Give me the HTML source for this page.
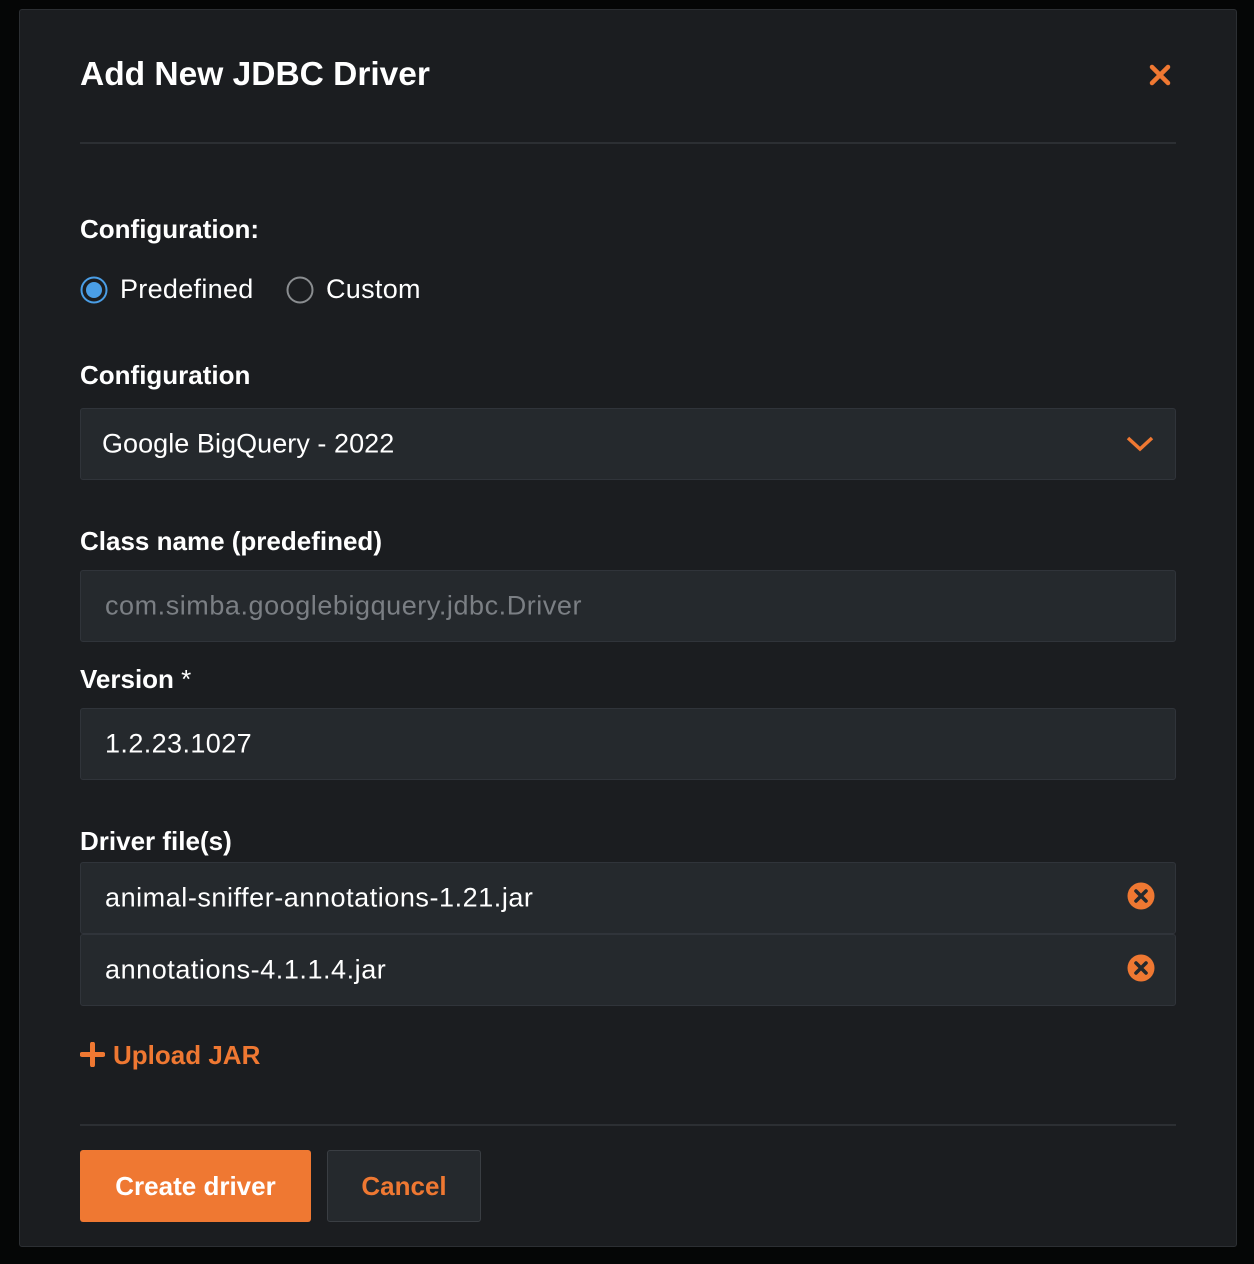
<!DOCTYPE html>
<html><head><meta charset="utf-8"><style>
*{box-sizing:border-box;margin:0;padding:0}
body{width:1254px;height:1264px;background:#050606;font-family:"Liberation Sans",sans-serif;position:relative;overflow:hidden;color:#fff}
.panel{position:absolute;left:19px;top:9px;width:1218px;height:1238px;background:#1b1d20;border:1px solid #2c2f33;border-radius:3px}
.a{position:absolute;white-space:nowrap}
.lbl{font-size:26px;font-weight:bold;color:#fff}
.inp{position:absolute;left:80px;width:1096px;height:72px;background:#25292d;border:1px solid #30343a;border-radius:3px}
.inp span{position:absolute;left:24px;top:50%;transform:translateY(-50%);font-size:27px;letter-spacing:0.5px;color:#fff;white-space:nowrap}
.hr{position:absolute;left:80px;width:1096px;height:2px;background:#2c2f33}
.x{position:absolute;right:20px;top:50%;margin-top:-16px;width:28px;height:28px}
</style></head><body>
<div class="panel"></div>
<div class="a" style="left:80px;top:56px;font-size:33.5px;font-weight:bold">Add New JDBC Driver</div>
<svg class="a" style="left:1148px;top:63px" width="24" height="24" viewBox="0 0 24 24"><path d="M4 4L20 20M20 4L4 20" stroke="#ef7832" stroke-width="4.5" stroke-linecap="round"/></svg>
<div class="hr" style="top:142px"></div>
<div class="a lbl" style="left:80px;top:214px">Configuration:</div>
<svg class="a" style="left:80px;top:276px" width="28" height="28"><circle cx="14" cy="14" r="12.5" fill="none" stroke="#4a9ee6" stroke-width="2"/><circle cx="14" cy="14" r="8" fill="#4a9ee6"/></svg>
<div class="a" style="left:120px;top:274px;font-size:27px;letter-spacing:0.3px">Predefined</div>
<svg class="a" style="left:286px;top:276px" width="28" height="28"><circle cx="14" cy="14" r="12.5" fill="none" stroke="#8a8d90" stroke-width="2"/></svg>
<div class="a" style="left:326px;top:274px;font-size:27px;letter-spacing:0.3px">Custom</div>
<div class="a lbl" style="left:80px;top:360px">Configuration</div>
<div class="inp" style="top:408px"><span style="left:21px;letter-spacing:0.05px">Google BigQuery - 2022</span>
<svg class="a" style="right:20px;top:25px" width="30" height="20" viewBox="0 0 30 20"><path d="M3 4L15 15L27 4" fill="none" stroke="#ef7832" stroke-width="3.5"/></svg></div>
<div class="a lbl" style="left:80px;top:526px">Class name (predefined)</div>
<div class="inp" style="top:570px"><span style="color:#7b7f84;letter-spacing:0.55px">com.simba.googlebigquery.jdbc.Driver</span></div>
<div class="a lbl" style="left:80px;top:664px">Version <span style="font-weight:normal">*</span></div>
<div class="inp" style="top:708px"><span style="letter-spacing:0.4px">1.2.23.1027</span></div>
<div class="a lbl" style="left:80px;top:826px">Driver file(s)</div>
<div class="inp" style="top:862px"><span style="letter-spacing:0.55px">animal-sniffer-annotations-1.21.jar</span>
<svg class="x" viewBox="0 0 28 28"><circle cx="14" cy="14" r="13.5" fill="#ef7832"/><path d="M9 9L19 19M19 9L9 19" stroke="#25292d" stroke-width="3.6" stroke-linecap="round"/></svg></div>
<div class="inp" style="top:934px"><span style="letter-spacing:0.55px">annotations-4.1.1.4.jar</span>
<svg class="x" viewBox="0 0 28 28"><circle cx="14" cy="14" r="13.5" fill="#ef7832"/><path d="M9 9L19 19M19 9L9 19" stroke="#25292d" stroke-width="3.6" stroke-linecap="round"/></svg></div>
<svg class="a" style="left:80px;top:1042px" width="25" height="25"><path d="M12.5 2V23M2 12.5H23" stroke="#ef7832" stroke-width="5" stroke-linecap="round"/></svg>
<div class="a" style="left:113px;top:1040px;font-size:26px;font-weight:bold;color:#ef7832">Upload JAR</div>
<div class="hr" style="top:1124px"></div>
<div class="a" style="left:80px;top:1150px;width:231px;height:72px;background:#ef7832;border-radius:3px;font-size:26px;font-weight:bold;text-align:center;line-height:72px">Create driver</div>
<div class="a" style="left:327px;top:1150px;width:154px;height:72px;background:#25292d;border:1px solid #3a3e43;border-radius:3px;font-size:26px;font-weight:bold;color:#ef7832;text-align:center;line-height:70px">Cancel</div>
</body></html>
